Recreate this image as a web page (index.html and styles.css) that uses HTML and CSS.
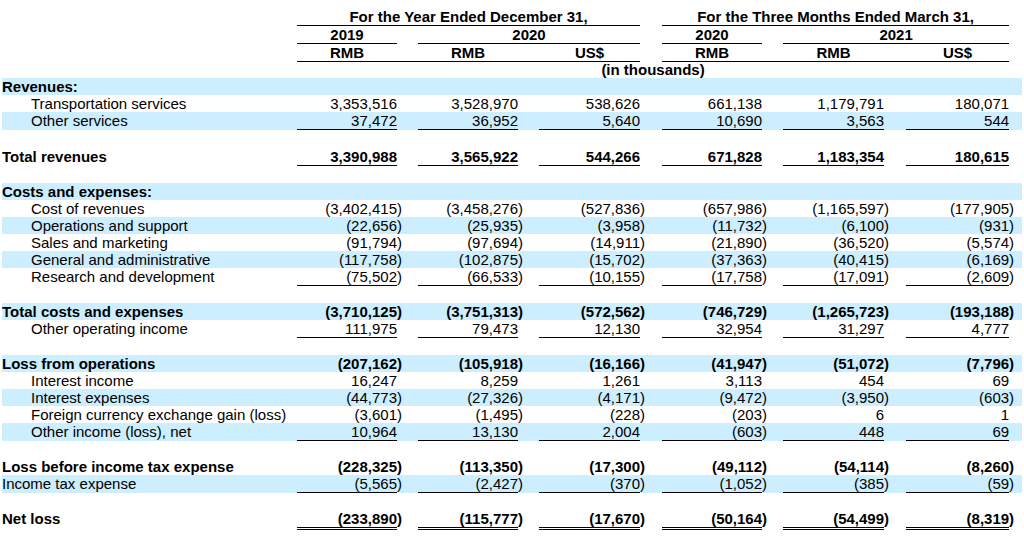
FILE: index.html
```html
<!DOCTYPE html>
<html lang="en">
<head>
<meta charset="utf-8">
<title>Consolidated Statements of Operations</title>
<link rel="stylesheet" href="styles.css">
</head>
<body>
<table class="fin">
  <colgroup>
    <col class="w-label">
    <col class="w-100"><col class="w-21"><col class="w-100"><col class="w-21"><col class="w-101">
    <col class="w-22">
    <col class="w-100"><col class="w-21"><col class="w-101"><col class="w-22"><col class="w-103">
    <col class="w-tail">
  </colgroup>
  <thead>
    <tr class="hd">
      <th></th>
      <th colspan="5" class="ul">For the Year Ended December 31,</th>
      <th></th>
      <th colspan="5" class="ul">For the Three Months Ended March 31,</th>
      <th></th>
    </tr>
    <tr class="hd">
      <th></th>
      <th class="ul">2019</th>
      <th></th>
      <th colspan="3" class="ul">2020</th>
      <th></th>
      <th class="ul">2020</th>
      <th></th>
      <th colspan="3" class="ul">2021</th>
      <th></th>
    </tr>
    <tr class="hd">
      <th></th>
      <th class="ul">RMB</th><th class="ul"></th><th class="ul">RMB</th><th class="ul"></th><th class="ul">US$</th>
      <th></th>
      <th class="ul">RMB</th><th class="ul"></th><th class="ul">RMB</th><th class="ul"></th><th class="ul">US$</th>
      <th></th>
    </tr>
    <tr class="hd hd-unit">
      <th></th>
      <th colspan="11">(in thousands)</th>
      <th></th>
    </tr>
  </thead>
  <tbody>
    <tr class="band b">
      <td class="lbl">Revenues:</td>
      <td></td><td></td><td></td><td></td><td></td><td></td><td></td><td></td><td></td><td></td><td></td><td></td>
    </tr>
    <tr>
      <td class="lbl ind">Transportation services</td>
      <td class="n">3,353,516</td><td></td><td class="n">3,528,970</td><td></td><td class="n">538,626</td><td></td>
      <td class="n">661,138</td><td></td><td class="n">1,179,791</td><td></td><td class="n">180,071</td><td></td>
    </tr>
    <tr class="band">
      <td class="lbl ind">Other services</td>
      <td class="n ul">37,472</td><td></td><td class="n ul">36,952</td><td></td><td class="n ul">5,640</td><td></td>
      <td class="n ul">10,690</td><td></td><td class="n ul">3,563</td><td></td><td class="n ul">544</td><td></td>
    </tr>
    <tr class="sp sp-18"><td colspan="13"></td></tr>
    <tr class="b">
      <td class="lbl">Total revenues</td>
      <td class="n ul">3,390,988</td><td></td><td class="n ul">3,565,922</td><td></td><td class="n ul">544,266</td><td></td>
      <td class="n ul">671,828</td><td></td><td class="n ul">1,183,354</td><td></td><td class="n ul">180,615</td><td></td>
    </tr>
    <tr class="sp"><td colspan="13"></td></tr>

    <tr class="band b">
      <td class="lbl">Costs and expenses:</td>
      <td></td><td></td><td></td><td></td><td></td><td></td><td></td><td></td><td></td><td></td><td></td><td></td>
    </tr>
    <tr>
      <td class="lbl ind">Cost of revenues</td>
      <td class="n">(3,402,415<span class="p">)</span></td><td></td><td class="n">(3,458,276<span class="p">)</span></td><td></td><td class="n">(527,836<span class="p">)</span></td><td></td>
      <td class="n">(657,986<span class="p">)</span></td><td></td><td class="n">(1,165,597<span class="p">)</span></td><td></td><td class="n">(177,905<span class="p">)</span></td><td></td>
    </tr>
    <tr class="band">
      <td class="lbl ind">Operations and support</td>
      <td class="n">(22,656<span class="p">)</span></td><td></td><td class="n">(25,935<span class="p">)</span></td><td></td><td class="n">(3,958<span class="p">)</span></td><td></td>
      <td class="n">(11,732<span class="p">)</span></td><td></td><td class="n">(6,100<span class="p">)</span></td><td></td><td class="n">(931<span class="p">)</span></td><td></td>
    </tr>
    <tr>
      <td class="lbl ind">Sales and marketing</td>
      <td class="n">(91,794<span class="p">)</span></td><td></td><td class="n">(97,694<span class="p">)</span></td><td></td><td class="n">(14,911<span class="p">)</span></td><td></td>
      <td class="n">(21,890<span class="p">)</span></td><td></td><td class="n">(36,520<span class="p">)</span></td><td></td><td class="n">(5,574<span class="p">)</span></td><td></td>
    </tr>
    <tr class="band">
      <td class="lbl ind">General and administrative</td>
      <td class="n">(117,758<span class="p">)</span></td><td></td><td class="n">(102,875<span class="p">)</span></td><td></td><td class="n">(15,702<span class="p">)</span></td><td></td>
      <td class="n">(37,363<span class="p">)</span></td><td></td><td class="n">(40,415<span class="p">)</span></td><td></td><td class="n">(6,169<span class="p">)</span></td><td></td>
    </tr>
    <tr>
      <td class="lbl ind">Research and development</td>
      <td class="n ul">(75,502<span class="p">)</span></td><td></td><td class="n ul">(66,533<span class="p">)</span></td><td></td><td class="n ul">(10,155<span class="p">)</span></td><td></td>
      <td class="n ul">(17,758<span class="p">)</span></td><td></td><td class="n ul">(17,091<span class="p">)</span></td><td></td><td class="n ul">(2,609<span class="p">)</span></td><td></td>
    </tr>
    <tr class="sp"><td colspan="13"></td></tr>

    <tr class="band b">
      <td class="lbl">Total costs and expenses</td>
      <td class="n">(3,710,125<span class="p">)</span></td><td></td><td class="n">(3,751,313<span class="p">)</span></td><td></td><td class="n">(572,562<span class="p">)</span></td><td></td>
      <td class="n">(746,729<span class="p">)</span></td><td></td><td class="n">(1,265,723<span class="p">)</span></td><td></td><td class="n">(193,188<span class="p">)</span></td><td></td>
    </tr>
    <tr>
      <td class="lbl ind">Other operating income</td>
      <td class="n ul">111,975</td><td></td><td class="n ul">79,473</td><td></td><td class="n ul">12,130</td><td></td>
      <td class="n ul">32,954</td><td></td><td class="n ul">31,297</td><td></td><td class="n ul">4,777</td><td></td>
    </tr>
    <tr class="sp"><td colspan="13"></td></tr>

    <tr class="band b">
      <td class="lbl">Loss from operations</td>
      <td class="n">(207,162<span class="p">)</span></td><td></td><td class="n">(105,918<span class="p">)</span></td><td></td><td class="n">(16,166<span class="p">)</span></td><td></td>
      <td class="n">(41,947<span class="p">)</span></td><td></td><td class="n">(51,072<span class="p">)</span></td><td></td><td class="n">(7,796<span class="p">)</span></td><td></td>
    </tr>
    <tr>
      <td class="lbl ind">Interest income</td>
      <td class="n">16,247</td><td></td><td class="n">8,259</td><td></td><td class="n">1,261</td><td></td>
      <td class="n">3,113</td><td></td><td class="n">454</td><td></td><td class="n">69</td><td></td>
    </tr>
    <tr class="band">
      <td class="lbl ind">Interest expenses</td>
      <td class="n">(44,773<span class="p">)</span></td><td></td><td class="n">(27,326<span class="p">)</span></td><td></td><td class="n">(4,171<span class="p">)</span></td><td></td>
      <td class="n">(9,472<span class="p">)</span></td><td></td><td class="n">(3,950<span class="p">)</span></td><td></td><td class="n">(603<span class="p">)</span></td><td></td>
    </tr>
    <tr>
      <td class="lbl ind">Foreign currency exchange gain (loss)</td>
      <td class="n">(3,601<span class="p">)</span></td><td></td><td class="n">(1,495<span class="p">)</span></td><td></td><td class="n">(228<span class="p">)</span></td><td></td>
      <td class="n">(203<span class="p">)</span></td><td></td><td class="n">6</td><td></td><td class="n">1</td><td></td>
    </tr>
    <tr class="band">
      <td class="lbl ind">Other income (loss), net</td>
      <td class="n ul">10,964</td><td></td><td class="n ul">13,130</td><td></td><td class="n ul">2,004</td><td></td>
      <td class="n ul">(603<span class="p">)</span></td><td></td><td class="n ul">448</td><td></td><td class="n ul">69</td><td></td>
    </tr>
    <tr class="sp"><td colspan="13"></td></tr>

    <tr class="b">
      <td class="lbl">Loss before income tax expense</td>
      <td class="n">(228,325<span class="p">)</span></td><td></td><td class="n">(113,350<span class="p">)</span></td><td></td><td class="n">(17,300<span class="p">)</span></td><td></td>
      <td class="n">(49,112<span class="p">)</span></td><td></td><td class="n">(54,114<span class="p">)</span></td><td></td><td class="n">(8,260<span class="p">)</span></td><td></td>
    </tr>
    <tr class="band">
      <td class="lbl">Income tax expense</td>
      <td class="n ul">(5,565<span class="p">)</span></td><td></td><td class="n ul">(2,427<span class="p">)</span></td><td></td><td class="n ul">(370<span class="p">)</span></td><td></td>
      <td class="n ul">(1,052<span class="p">)</span></td><td></td><td class="n ul">(385<span class="p">)</span></td><td></td><td class="n ul">(59<span class="p">)</span></td><td></td>
    </tr>
    <tr class="sp"><td colspan="13"></td></tr>

    <tr class="b">
      <td class="lbl">Net loss</td>
      <td class="n dul">(233,890<span class="p">)</span></td><td></td><td class="n dul">(115,777<span class="p">)</span></td><td></td><td class="n dul">(17,670<span class="p">)</span></td><td></td>
      <td class="n dul">(50,164<span class="p">)</span></td><td></td><td class="n dul">(54,499<span class="p">)</span></td><td></td><td class="n dul">(8,319<span class="p">)</span></td><td></td>
    </tr>
  </tbody>
</table>
</body>
</html>
```

FILE: styles.css
```css
html, body {
  background: #ffffff;
}

body {
  margin: 8px 2px;
  font-family: "Liberation Sans", Arial, sans-serif;
  font-size: 15px;
  line-height: 17px;
  color: #000000;
}

.fin {
  width: 1020px;
  table-layout: fixed;
  border-collapse: separate;
  border-spacing: 0;
}

.w-label { width: 295px; }
.w-100 { width: 100px; }
.w-101 { width: 101px; }
.w-103 { width: 103px; }
.w-21 { width: 21px; }
.w-22 { width: 22px; }
.w-tail { width: 13px; }

.fin th,
.fin td {
  padding: 0;
  vertical-align: top;
  white-space: nowrap;
  height: 17px;
}

.fin th {
  font-weight: bold;
  text-align: center;
}

.hd-unit th {
  height: 16px;
  line-height: 16px;
}

.ul {
  border-bottom: 1px solid #000000;
}

.dul {
  border-bottom: 3px double #000000;
}

.band {
  background: #cceeff;
}

.b td {
  font-weight: bold;
}

.lbl {
  padding-left: 1px;
  text-align: left;
}

.lbl.ind {
  padding-left: 29px;
}

.n {
  text-align: right;
}

.p {
  margin-right: -5px;
}

.sp td {
  height: 17px;
}

.sp-18 td {
  height: 18px;
}
```
